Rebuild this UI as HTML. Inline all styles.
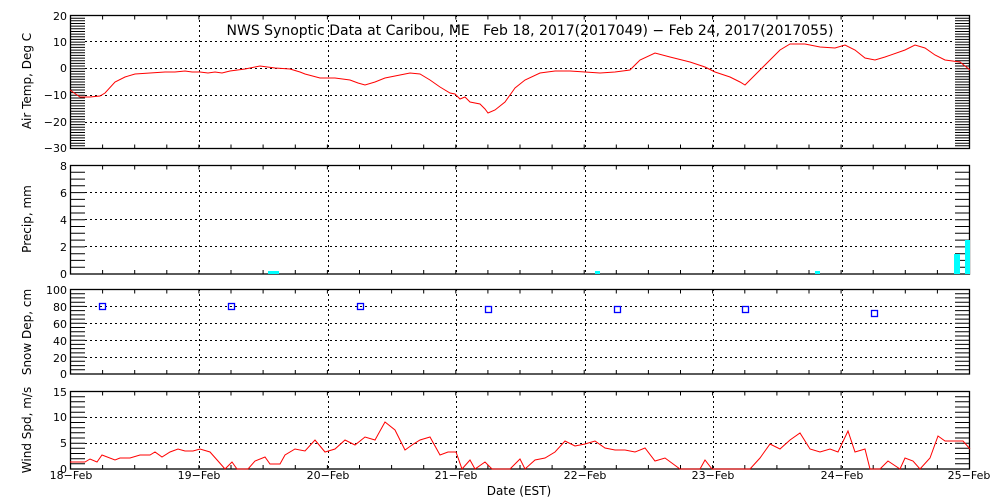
<!DOCTYPE html>
<html><head><style>body{margin:0;background:#fff}svg{display:block;font-family:"DejaVu Sans","Liberation Sans",sans-serif}</style></head><body>
<svg width="1000" height="500" viewBox="0 0 1000 500">
<rect width="1000" height="500" fill="#fff"/>
<g stroke="#000" stroke-width="1" stroke-dasharray="2,3" fill="none">
<path d="M199.5 15V148M328.5 15V148M456.5 15V148M585.5 15V148M713.5 15V148M842.5 15V148"/>
<path d="M199.5 165V274M328.5 165V274M456.5 165V274M585.5 165V274M713.5 165V274M842.5 165V274"/>
<path d="M199.5 289V374M328.5 289V374M456.5 289V374M585.5 289V374M713.5 289V374M842.5 289V374"/>
<path d="M199.5 391V469M328.5 391V469M456.5 391V469M585.5 391V469M713.5 391V469M842.5 391V469"/>
<path d="M85 41.5H955M85 68.5H955M85 95.5H955M85 122.5H955"/>
<path d="M85 192.5H955M85 219.5H955M85 246.5H955"/>
<path d="M85 306.5H955M85 323.5H955M85 340.5H955M85 357.5H955"/>
<path d="M85 417.5H955M85 443.5H955"/>
</g>
<g stroke="#000" stroke-width="1.3" fill="none">
<rect x="70.5" y="15.5" width="899" height="133"/>
<rect x="70.5" y="165.5" width="899" height="108.5"/>
<rect x="70.5" y="289.5" width="899" height="84.5"/>
<rect x="70.5" y="391.5" width="899" height="77.5"/>
</g>
<g id="ticks" stroke="#000" stroke-width="1">
<path id="t1" d=""/>
</g>
<script>
var s='';
function minor(top,bot,n){for(var i=0;i<=n;i++){var y=(top+(bot-top)*i/n).toFixed(1);s+='M71 '+y+'H85M955 '+y+'H970';}}
minor(15.5,148.5,50);minor(165.5,274,16);minor(289.5,374,20);minor(391.5,469,15);
var pans=[[15.5,148.5],[165.5,274],[289.5,374],[391.5,469]];
pans.forEach(function(p){for(var i=1;i<28;i++){var x=(70.5+i*899/28).toFixed(1);s+='M'+x+' '+p[0]+'v4M'+x+' '+p[1]+'v-4';}});
document.getElementById('t1').setAttribute('d',s);
</script>
<polyline fill="none" stroke="#f00" stroke-width="1" points="70,90 80,97 90,97 100,96 105,93 115,82 125,77 135,74 150,73 165,72 175,72 185,71 192,72 200,72 208,73 215,72 222,73 230,71 245,69 255,67 260,66 275,68 290,69 300,72 305,74 320,78 335,78 350,80 358,83 365,85 375,82 385,78 400,75 410,73 420,74 430,80 440,87 450,93 455,94 460,99 465,97 470,102 480,104 485,109 488,113 495,110 505,102 515,88 525,80 540,73 555,71 570,71 585,72 600,73 615,72 630,70 640,60 655,53 670,57 690,62 705,67 715,72 730,77 740,82 745,85 750,80 760,70 770,60 780,50 790,44 805,44 820,47 835,48 845,45 855,50 865,58 875,60 885,57 905,50 915,45 925,48 935,55 945,60 960,62 970,70"/>
<g fill="#0ff"><rect x="268" y="271" width="11" height="3"/><rect x="595" y="271" width="5" height="3"/><rect x="815" y="271" width="5" height="3"/><rect x="954" y="254" width="6" height="20"/><rect x="965" y="240" width="5" height="34"/></g>
<g fill="none" stroke="#00f" stroke-width="1.3"><rect x="99.5" y="303.5" width="6" height="6"/><rect x="228.5" y="303.5" width="6" height="6"/><rect x="357.5" y="303.5" width="6" height="6"/><rect x="485.5" y="306.5" width="6" height="6"/><rect x="614.5" y="306.5" width="6" height="6"/><rect x="742.5" y="306.5" width="6" height="6"/><rect x="871.5" y="310.5" width="6" height="6"/></g>
<polyline fill="none" stroke="#f00" stroke-width="1" points="70,462 85,462 90,459 97,462 102,455 115,460 120,458 130,458 140,455 150,455 155,452 162,457 170,452 178,449 185,451 193,451 200,449 210,452 218,461 225,469 232,462 237,469 248,469 255,461 265,457 270,464 280,464 285,455 295,449 305,451 315,440 325,452 335,449 345,440 355,445 365,437 375,440 385,422 395,430 405,450 412,445 420,440 430,437 440,455 448,452 456,452 462,469 470,460 475,469 485,462 492,469 510,469 520,459 525,469 535,460 545,458 555,452 565,441 575,446 585,444 595,441 605,448 615,450 625,450 635,452 645,448 655,461 665,458 680,469 700,469 705,460 712,469 750,469 760,458 770,444 780,449 790,440 800,433 810,449 820,452 830,449 838,452 848,431 855,452 865,449 870,469 880,469 888,461 900,469 905,458 913,461 920,469 930,458 938,436 945,441 955,441 963,441 970,449"/>
<g font-size="11" text-anchor="end" fill="#000">
<text x="67" y="20">20</text><text x="67" y="46">10</text><text x="67" y="72">0</text><text x="67" y="99">−10</text><text x="67" y="126">−20</text><text x="67" y="152">−30</text>
<text x="67" y="170">8</text><text x="67" y="197">6</text><text x="67" y="224">4</text><text x="67" y="251">2</text><text x="67" y="278">0</text>
<text x="67" y="294">100</text><text x="67" y="311">80</text><text x="67" y="328">60</text><text x="67" y="345">40</text><text x="67" y="362">20</text><text x="67" y="378">0</text>
<text x="67" y="396">15</text><text x="67" y="421">10</text><text x="67" y="447">5</text><text x="67" y="473">0</text>
</g>
<g font-size="11" text-anchor="middle" fill="#000">
<text x="71" y="479">18−Feb</text><text x="199" y="479">19−Feb</text><text x="328" y="479">20−Feb</text><text x="456" y="479">21−Feb</text><text x="585" y="479">22−Feb</text><text x="713" y="479">23−Feb</text><text x="842" y="479">24−Feb</text><text x="969" y="479">25−Feb</text>
<text x="519" y="495" font-size="12">Date (EST)</text>
<text x="530" y="35" font-size="14" xml:space="preserve">NWS Synoptic Data at Caribou, ME   Feb 18, 2017(2017049) − Feb 24, 2017(2017055)</text>
<text transform="translate(31 81) rotate(-90)" font-size="12">Air Temp, Deg C</text>
<text transform="translate(31 219) rotate(-90)" font-size="12">Precip, mm</text>
<text transform="translate(31 332) rotate(-90)" font-size="12">Snow Dep, cm</text>
<text transform="translate(31 430) rotate(-90)" font-size="12">Wind Spd, m/s</text>
</g>
</svg>
</body></html>
